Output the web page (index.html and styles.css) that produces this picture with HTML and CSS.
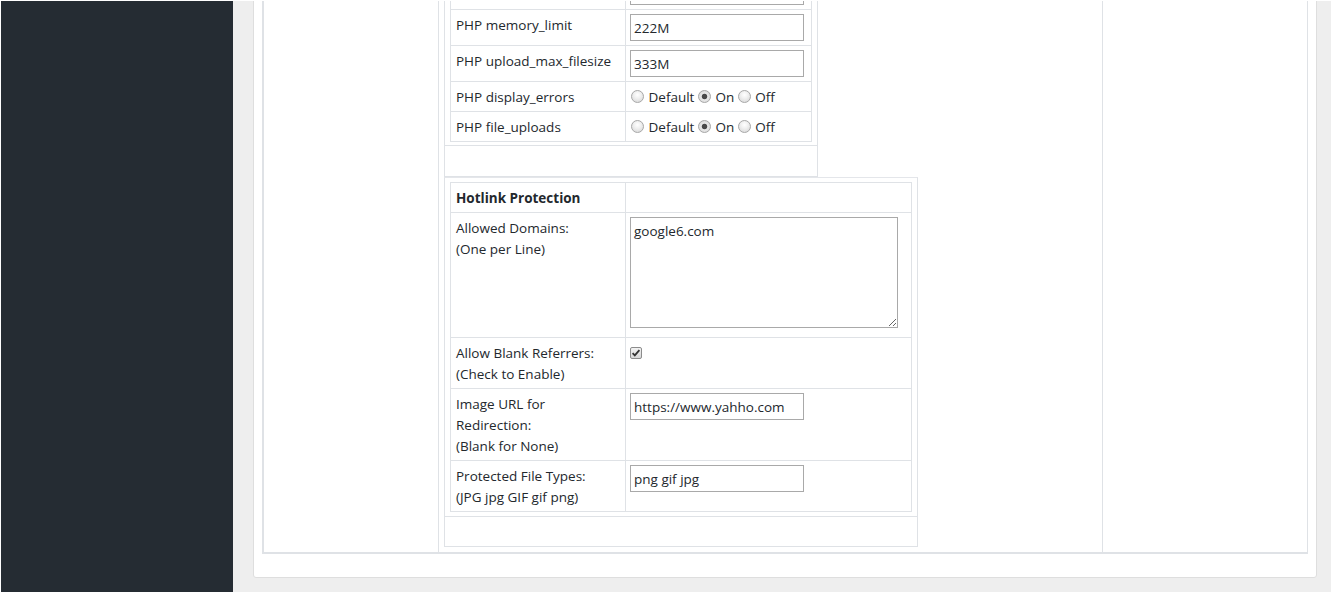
FILE: index.html
```html
<!DOCTYPE html>
<html lang="en">
<head>
<meta charset="utf-8">
<title>Hotlink Protection</title>
<link rel="stylesheet" href="styles.css">
</head>
<body>
<div class="page">
  <aside class="sidebar"></aside>
  <main class="content">
    <div class="card">
      <div class="outer">
        <div class="col col-left"></div>
        <div class="col col-mid">
          <div class="box box-php">
            <div class="box-main">
              <table class="settings settings-php">
                <tr class="head-row"><th class="label"></th><td class="value"></td></tr>
                <tr><td class="label"></td><td class="value"><input class="field" type="text" value=""></td></tr>
                <tr><td class="label">PHP memory_limit</td><td class="value"><input class="field" type="text" value="222M"></td></tr>
                <tr><td class="label">PHP upload_max_filesize</td><td class="value"><input class="field" type="text" value="333M"></td></tr>
                <tr><td class="label">PHP display_errors</td><td class="value"><input class="radio" type="radio" name="de"> Default <input class="radio" type="radio" name="de" checked> On <input class="radio" type="radio" name="de"> Off</td></tr>
                <tr><td class="label">PHP file_uploads</td><td class="value"><input class="radio" type="radio" name="fu"> Default <input class="radio" type="radio" name="fu" checked> On <input class="radio" type="radio" name="fu"> Off</td></tr>
              </table>
            </div>
            <div class="box-foot"></div>
          </div>
          <div class="box box-hotlink">
            <div class="box-main">
              <table class="settings settings-hotlink">
                <tr><th class="label">Hotlink Protection</th><td class="value"></td></tr>
                <tr><td class="label">Allowed Domains:<br>(One per Line)</td><td class="value"><textarea class="area">google6.com</textarea></td></tr>
                <tr><td class="label">Allow Blank Referrers:<br>(Check to Enable)</td><td class="value"><span class="check"><svg width="12" height="12" viewBox="0 0 12 12"><defs><linearGradient id="cg" x1="0" y1="0" x2="0" y2="1"><stop offset="0" stop-color="#f4f4f4"/><stop offset="1" stop-color="#d6d6d6"/></linearGradient></defs><rect x="0.5" y="0.5" width="11" height="11" rx="1.5" fill="url(#cg)" stroke="#8c8c8c"/><path d="M2.6 6.2 L4.8 8.4 L9.4 3.2" fill="none" stroke="#333" stroke-width="1.8"/></svg></span></td></tr>
                <tr><td class="label">Image URL for Redirection:<br>(Blank for None)</td><td class="value"><input class="field" type="text" value="https://www.yahho.com"></td></tr>
                <tr><td class="label">Protected File Types:<br>(JPG jpg GIF gif png)</td><td class="value"><input class="field" type="text" value="png gif jpg"></td></tr>
              </table>
            </div>
            <div class="box-foot"></div>
          </div>
        </div>
        <div class="col col-right"></div>
      </div>
    </div>
  </main>
</div>
</body>
</html>
```
FILE: styles.css
```css
html, body {
  margin: 0;
  padding: 0;
  height: 100%;
  overflow: hidden;
  background: #ffffff;
}

.page {
  display: flex;
  height: 591px;
  margin: 1px 2px 0 1px;
  font-family: "Open Sans", "Liberation Sans", sans-serif;
  font-size: 13.5px;
  line-height: 21px;
  color: #23282d;
}

.sidebar {
  flex: 0 0 232px;
  background: #252c33;
}

.content {
  flex: 1 1 auto;
  background: #eeeeee;
  overflow: hidden;
  padding: 0 14px 0 20px;
}

.card {
  margin-top: -78px;
  background: #ffffff;
  border: 1px solid #dedede;
  border-radius: 3px;
  padding: 8px 8px 23px 8px;
}

.outer {
  display: grid;
  grid-template-columns: 174px 1fr 204px;
  border-top: 1px solid #dfe2e6;
  border-left: 2px solid #dfe2e6;
  border-right: 1px solid #dfe2e6;
  border-bottom: 2px solid #dfe2e6;
}

.col-mid {
  border-left: 1px solid #dfe2e6;
  border-right: 1px solid #dfe2e6;
  padding: 5px 0 5px 5px;
}

.box {
  border: 1px solid #dfe2e6;
  box-sizing: border-box;
}

.box-php { width: 374px; }
.box-hotlink { width: 474px; border-top-color: #e4e6ea; }

.box-main {
  padding: 4px 5px 3px 5px;
  border-bottom: 1px solid #dfe2e6;
}

.box-hotlink .box-main { padding-bottom: 4px; }

.box-foot {
  height: 30px;
}

.box-hotlink .box-foot { height: 29px; }

.settings {
  border-collapse: collapse;
  table-layout: fixed;
}

.settings-php { width: 362px; }
.settings-hotlink { width: 462px; }

.settings td, .settings th {
  border: 1px solid #dfe2e6;
  padding: 5px 4px 3px 5px;
  vertical-align: top;
  text-align: left;
}

.settings .head-row th,
.settings .head-row td {
  height: 21px;
}

.settings .label {
  width: 165px;
}

.settings th.label {
  font-weight: 700;
}

.settings .value {
  padding-left: 4px;
  white-space: nowrap;
}

.field {
  display: block;
  box-sizing: border-box;
  width: 174px;
  height: 27px;
  margin: -1px 0 1px 0;
  padding: 1px 3px 0 3px;
  border: 1px solid #a9a9a9;
  border-radius: 0;
  font: inherit;
  color: #23282d;
  background: #ffffff;
}

.area {
  display: block;
  box-sizing: border-box;
  width: 268px;
  height: 111px;
  margin: -1px 0 6px 0;
  padding: 3px 3px;
  border: 1px solid #a9a9a9;
  border-radius: 0;
  font: inherit;
  color: #23282d;
  background: #ffffff;
}

.radio {
  -webkit-appearance: none;
  appearance: none;
  width: 13px;
  height: 13px;
  margin: 0 1px 0 0;
  vertical-align: -1px;
  border: 1px solid #a8a8a8;
  border-radius: 50%;
  box-sizing: border-box;
  background: radial-gradient(circle at 50% 35%, #ffffff 0, #f2f2f2 35%, #d4d4d4 100%);
}

.radio:first-child {
  margin-left: 1px;
}

.radio:checked {
  background: radial-gradient(circle, #4a4a4a 0, #4a4a4a 2.3px, #e9e9e9 3.2px, #d2d2d2 100%);
}

.check {
  display: inline-block;
  width: 12px;
  height: 12px;
  margin: 4px 0 0 0;
  vertical-align: top;
}

.check svg {
  display: block;
}
```
